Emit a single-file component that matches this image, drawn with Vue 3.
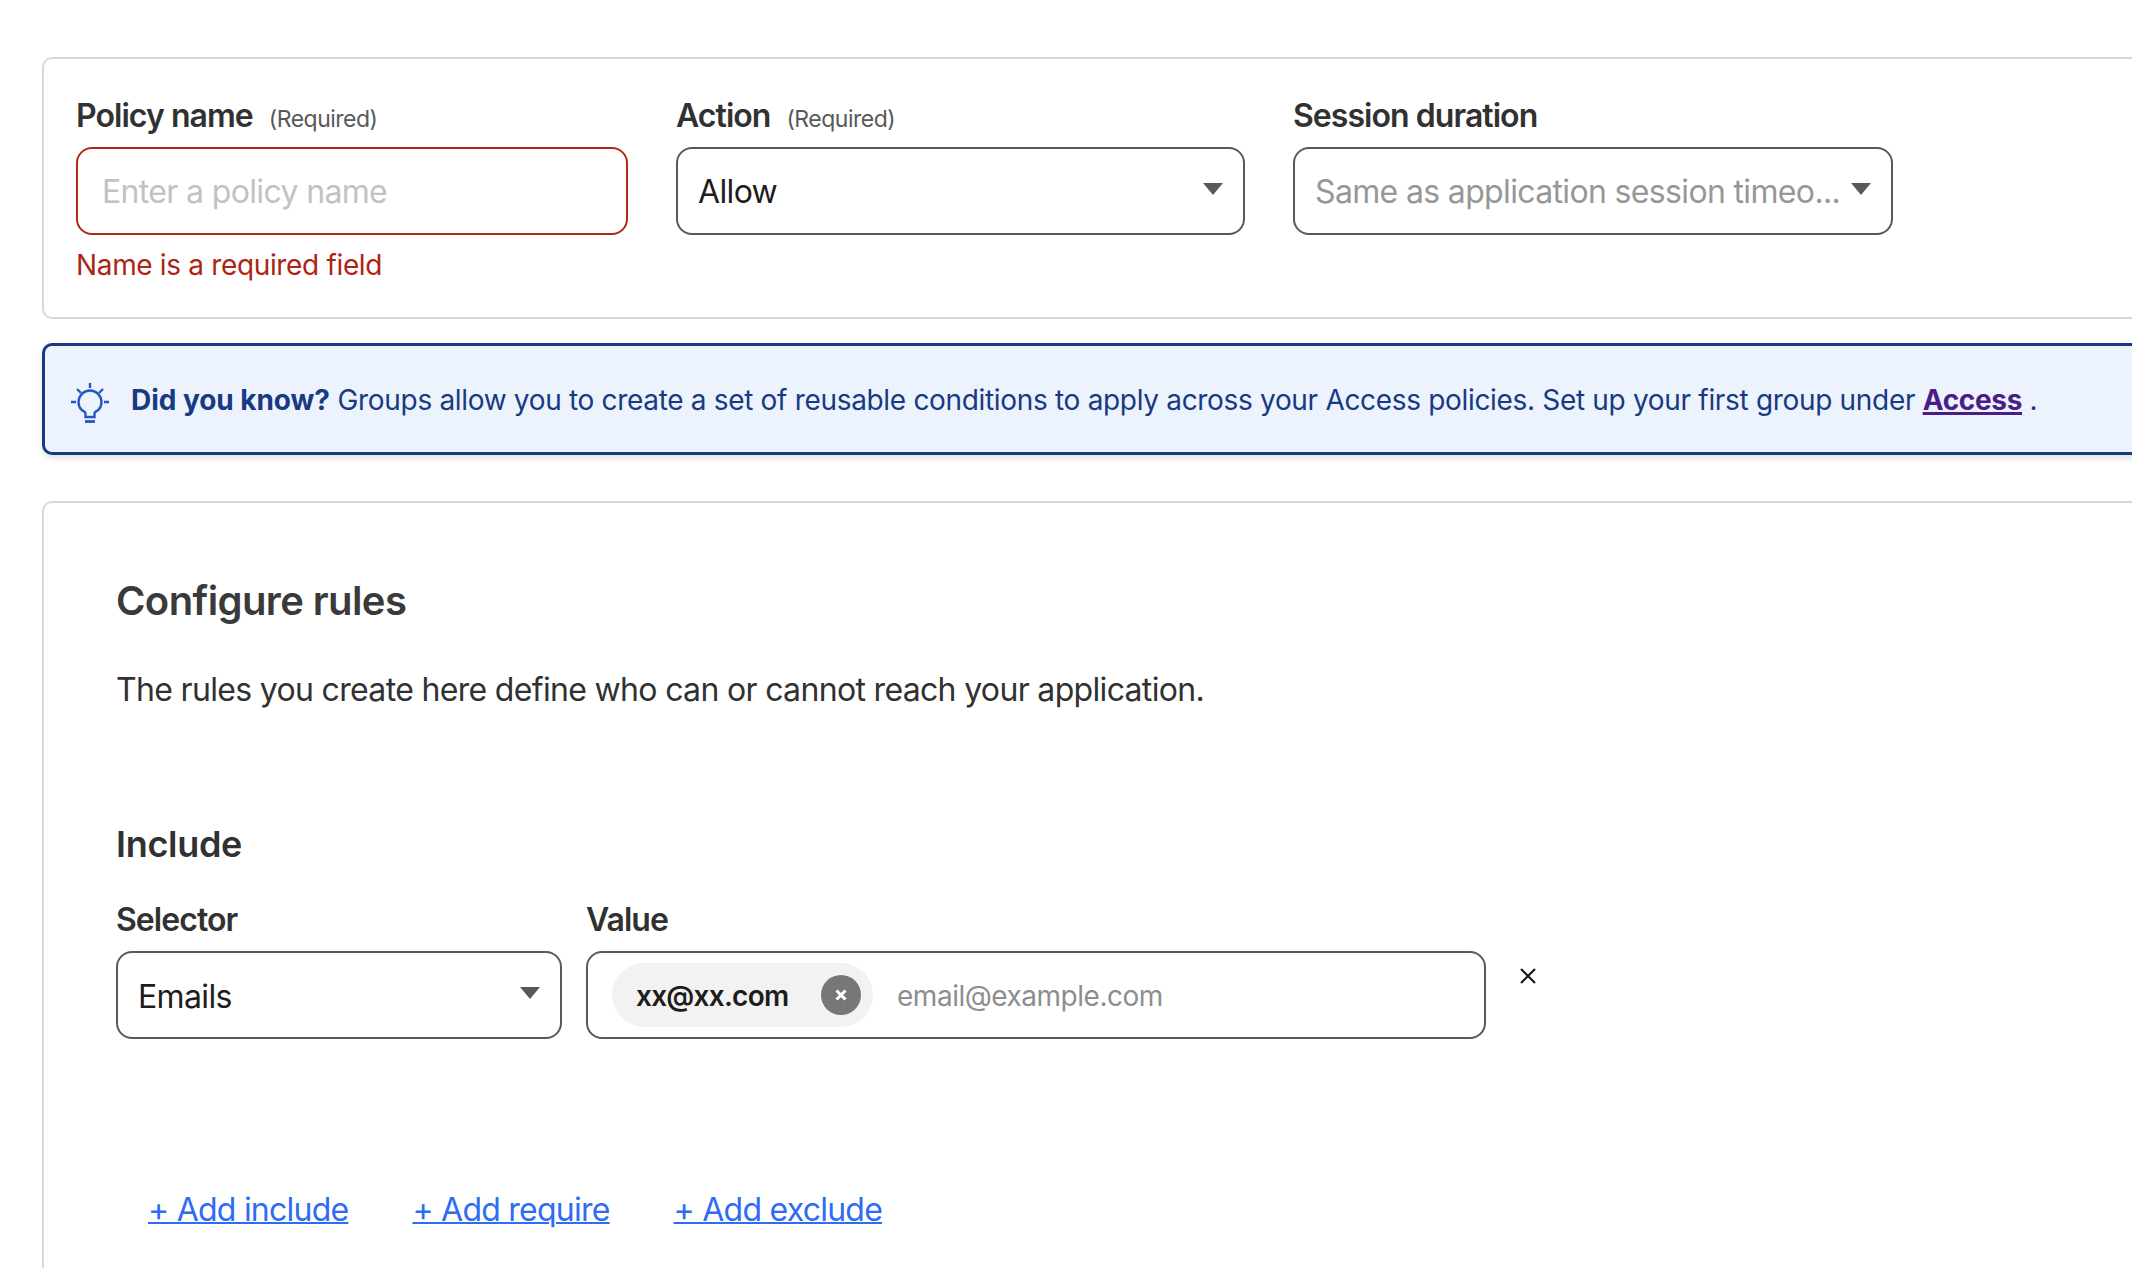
<script setup>
const fields = [
  { label: 'Action', required: true, value: 'Allow', muted: false, cls: 'f-action' },
  { label: 'Session duration', required: false, value: 'Same as application session timeo...', muted: true, cls: 'f-session' }
]
const links = ['+ Add include', '+ Add require', '+ Add exclude']
</script>

<template>
  <div class="page">
    <section class="card top">
      <div class="field f-name">
        <div class="label-row"><span class="label">Policy name</span><span class="req">(Required)</span></div>
        <div class="box error"><span class="ph">Enter a policy name</span></div>
        <div class="err-msg">Name is a required field</div>
      </div>
      <div v-for="f in fields" :key="f.label" class="field" :class="f.cls">
        <div class="label-row"><span class="label">{{ f.label }}</span><span v-if="f.required" class="req">(Required)</span></div>
        <div class="box select">
          <span :class="f.muted ? 'muted' : 'val'">{{ f.value }}</span>
          <i class="caret"></i>
        </div>
      </div>
    </section>

    <section class="banner">
      <svg class="bulb" viewBox="0 0 38 40" width="38" height="40" fill="none" stroke="#2456c4" stroke-width="2.4">
        <path d="M19 0v5M6 6l4 4M32 6l-4 4M0 19h5M33 19h5" />
        <path d="M14.500 34v-3.500c0-1.500-1.500-2.500-4-3.700A11.500 11.500 0 1 1 27.500 26.800c-2.500 1.200-4 2.200-4 3.700V34z" />
        <path d="M14 38.500h10" stroke-width="2.800" />
      </svg>
      <p class="banner-text"><b>Did you know?</b> Groups allow you to create a set of reusable conditions to apply across your Access policies. Set up your first group under <a class="access">Access</a> .</p>
    </section>

    <section class="card rules">
      <h2 class="title">Configure rules</h2>
      <p class="desc">The rules you create here define who can or cannot reach your application.</p>
      <h3 class="include">Include</h3>
      <div class="rule-row">
        <div class="field f-selector">
          <div class="label-row"><span class="label">Selector</span></div>
          <div class="box select"><span class="val">Emails</span><i class="caret"></i></div>
        </div>
        <div class="field f-value">
          <div class="label-row"><span class="label">Value</span></div>
          <div class="box value-box">
            <span class="chip">
              <span class="chip-text">xx@xx.com</span>
              <span class="chip-x">
                <svg viewBox="0 0 12 12" width="12" height="12" stroke="#fff" stroke-width="3" fill="none"><path d="M1.500 1.500l9 9M10.500 1.500l-9 9" /></svg>
              </span>
            </span>
            <span class="email-ph">email@example.com</span>
          </div>
        </div>
        <svg class="remove" viewBox="0 0 16 16" width="16" height="16" stroke="#1a1a1a" stroke-width="2.200" fill="none"><path d="M1 1l14 14M15 1L1 15" /></svg>
      </div>
      <div class="links">
        <a v-for="l in links" :key="l" class="link">{{ l }}</a>
      </div>
    </section>
  </div>
</template>

<style>
html, body { margin: 0; background: #fff; overflow: hidden; }
</style>

<style scoped>
.page {
  width: 2132px;
  height: 1268px;
  overflow: hidden;
  box-sizing: border-box;
  padding: 57px 0 0 42px;
  font-family: Inter, "Noto Sans", sans-serif;
  color: #313131;
}
.card {
  width: 2200px;
  box-sizing: border-box;
  background: #fff;
  border: 2px solid #d9d9d9;
  border-radius: 10px;
}
.top {
  display: flex;
  height: 262px;
  padding: 37px 0 0 32px;
}
.field { flex: none; }
.f-name { width: 552px; margin-right: 48px; }
.f-action { width: 569px; margin-right: 48px; }
.f-session { width: 600px; }
.f-selector { width: 446px; margin-right: 24px; }
.f-value { width: 900px; }
.label-row {
  display: flex;
  align-items: baseline;
  height: 40px;
  line-height: 40px;
  margin-bottom: 11px;
}
.label {
  font-size: 32px;
  font-weight: 600;
  letter-spacing: -0.95px;
  color: #313131;
}
.req {
  font-size: 23px;
  margin-left: 16px;
  color: #595959;
  letter-spacing: -0.5px;
}
.box {
  height: 88px;
  box-sizing: border-box;
  border: 2px solid #595959;
  border-radius: 16px;
  display: flex;
  align-items: center;
  font-size: 32px;
  letter-spacing: -0.65px;
  background: #fff;
}
.error { border-color: #b0291a; padding-left: 24px; }
.ph { color: #c2c2c2; }
.err-msg {
  margin-top: 12px;
  line-height: 36px;
  font-size: 28px;
  letter-spacing: -0.34px;
  color: #ac2513;
}
.select {
  justify-content: space-between;
  padding: 0 20px;
}
.val { color: #1d1d1d; }
.f-selector .val { padding-top: 2px; }
.muted { color: #979797; white-space: nowrap; }
.caret {
  flex: none;
  width: 0;
  height: 0;
  margin-bottom: 4px;
  border-left: 10px solid transparent;
  border-right: 10px solid transparent;
  border-top: 12px solid #595959;
}
.banner {
  width: 2200px;
  height: 112px;
  box-sizing: border-box;
  margin-top: 24px;
  display: flex;
  align-items: center;
  padding-left: 26px;
  background: #edf3fd;
  border: 3px solid #173a82;
  border-radius: 10px;
  box-shadow: 0 3px 6px rgba(0, 0, 0, 0.12);
}
.bulb { flex: none; margin: 8px 22px 0 0; }
.banner-text {
  margin: 2px 0 0;
  font-size: 28px;
  line-height: 36px;
  color: #173a82;
  white-space: nowrap;
  letter-spacing: -0.32px;
}
.banner-text b { font-weight: 700; letter-spacing: -0.05px; }
.access {
  font-weight: 700;
  color: #4b1e87;
  text-decoration: underline;
  text-decoration-thickness: 3px;
}
.rules {
  margin-top: 46px;
  height: 800px;
  padding-left: 72px;
}
.title {
  margin: 73px 0 0;
  font-size: 40px;
  line-height: 50px;
  font-weight: 600;
  color: #3a3a3a;
  letter-spacing: -0.6px;
}
.desc {
  margin: 42px 0 0;
  font-size: 32px;
  line-height: 44px;
  letter-spacing: -0.67px;
  color: #313131;
}
.include {
  margin: 109px 0 0;
  font-size: 36px;
  line-height: 46px;
  font-weight: 600;
  color: #313131;
  letter-spacing: -0.3px;
}
.rule-row {
  display: flex;
  align-items: flex-start;
  margin-top: 33px;
}
.value-box { padding-left: 24px; }
.chip {
  height: 64px;
  width: 261px;
  box-sizing: border-box;
  padding: 0 12px 0 24px;
  display: flex;
  align-items: center;
  justify-content: space-between;
  background: #f2f2f2;
  border-radius: 32px;
}
.chip-text { padding-top: 2px; font-size: 28px; font-weight: 600; letter-spacing: -0.75px; color: #1d1d1d; }
.chip-x {
  width: 40px;
  height: 40px;
  border-radius: 50%;
  background: #777;
  display: flex;
  align-items: center;
  justify-content: center;
}
.email-ph { padding-top: 2px; margin-left: 24px; font-size: 28px; letter-spacing: -0.48px; color: #8e8e8e; }
.remove { flex: none; margin: 68px 0 0 34px; }
.links {
  display: flex;
  gap: 64px;
  margin: 151px 0 0 32px;
}
.link {
  font-size: 32px;
  line-height: 40px;
  letter-spacing: -0.76px;
  color: #2e6cf6;
  text-decoration: underline;
  text-decoration-thickness: 2px;
}
</style>
